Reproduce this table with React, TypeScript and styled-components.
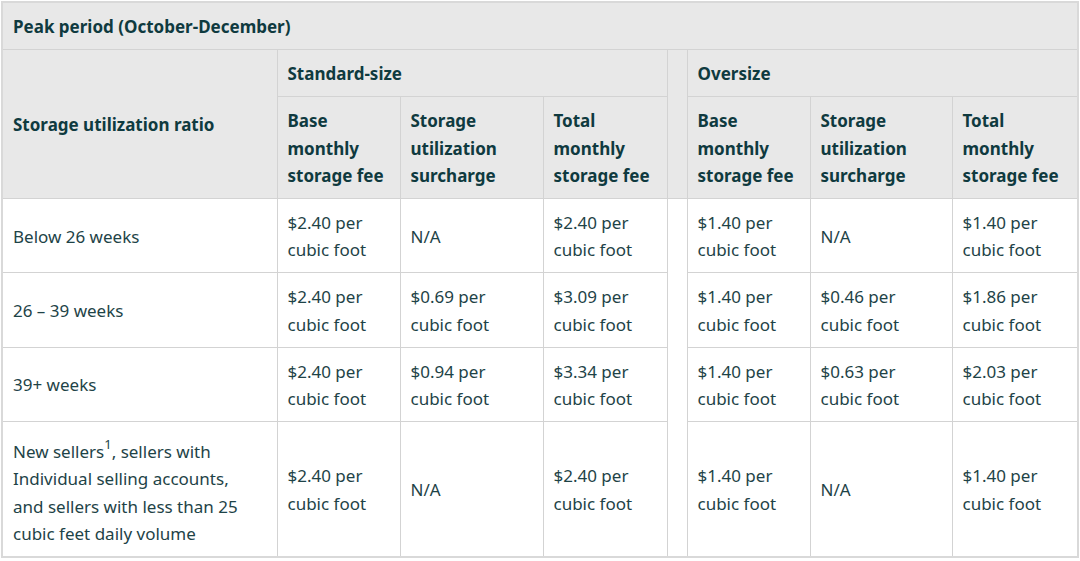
import React from "react";
import styled, { createGlobalStyle } from "styled-components";

const Global = createGlobalStyle`
  html, body { margin: 0; padding: 0; background: #ffffff; }
  body { font-family: "Noto Sans", "Open Sans", sans-serif; }
`;

const Page = styled.div`
  padding: 1px 2px 0 1px;
`;

const Table = styled.table`
  border-collapse: collapse;
  width: 1076px;
  table-layout: fixed;
  border: 2px solid #d9d9d9;
  font-family: "Noto Sans", "Open Sans", sans-serif;
  font-size: 17px;
  line-height: 27.2px;
  color: #0f3a3f;
`;

const Th = styled.th`
  background: #e8e8e8;
  border: 1px solid #d3d3d3;
  text-align: left;
  vertical-align: middle;
  font-weight: 700;
  padding: 10px 12px 9px 10px;
`;

const Td = styled.td`
  background: #ffffff;
  border: 1px solid #d3d3d3;
  vertical-align: middle;
  padding: 10px 16px 9px 10px;
  font-weight: 400;
  color: #1e4347;
`;

const Spacer = styled.td<{ $head?: boolean }>`
  background: ${(p) => (p.$head ? "#e8e8e8" : "#ffffff")};
  border: 1px solid #d3d3d3;
  padding: 0;
`;

const Sup = styled.sup`
  font-size: 13px;
  line-height: 24px;
  vertical-align: 9px;
`;

const cols = [275, 123, 143, 124, 20, 123, 142, 126];

type Row = {
  label: React.ReactNode;
  std: [string, string, string];
  over: [string, string, string];
};

const rows: Row[] = [
  {
    label: "Below 26 weeks",
    std: ["$2.40 per cubic foot", "N/A", "$2.40 per cubic foot"],
    over: ["$1.40 per cubic foot", "N/A", "$1.40 per cubic foot"],
  },
  {
    label: "26 – 39 weeks",
    std: ["$2.40 per cubic foot", "$0.69 per cubic foot", "$3.09 per cubic foot"],
    over: ["$1.40 per cubic foot", "$0.46 per cubic foot", "$1.86 per cubic foot"],
  },
  {
    label: "39+ weeks",
    std: ["$2.40 per cubic foot", "$0.94 per cubic foot", "$3.34 per cubic foot"],
    over: ["$1.40 per cubic foot", "$0.63 per cubic foot", "$2.03 per cubic foot"],
  },
  {
    label: (
      <>
        New sellers<Sup>1</Sup>, sellers with Individual selling accounts, and sellers with less than 25 cubic feet daily volume
      </>
    ),
    std: ["$2.40 per cubic foot", "N/A", "$2.40 per cubic foot"],
    over: ["$1.40 per cubic foot", "N/A", "$1.40 per cubic foot"],
  },
];

const subHeads = ["Base monthly storage fee", "Storage utilization surcharge", "Total monthly storage fee"];

export default function App() {
  return (
    <Page>
      <Global />
      <Table>
        <colgroup>
          {cols.map((w, i) => (
            <col key={i} style={{ width: w }} />
          ))}
        </colgroup>
        <thead>
          <tr>
            <Th colSpan={8}>Peak period (October-December)</Th>
          </tr>
          <tr>
            <Th rowSpan={2}>Storage utilization ratio</Th>
            <Th colSpan={3}>Standard-size</Th>
            <Spacer $head rowSpan={2} />
            <Th colSpan={3}>Oversize</Th>
          </tr>
          <tr>
            {subHeads.map((h) => (
              <Th key={"s" + h}>{h}</Th>
            ))}
            {subHeads.map((h) => (
              <Th key={"o" + h}>{h}</Th>
            ))}
          </tr>
        </thead>
        <tbody>
          {rows.map((r, i) => (
            <tr key={i}>
              <Td>{r.label}</Td>
              {r.std.map((c, j) => (
                <Td key={"s" + j}>{c}</Td>
              ))}
              {i === 0 && <Spacer rowSpan={rows.length} />}
              {r.over.map((c, j) => (
                <Td key={"o" + j}>{c}</Td>
              ))}
            </tr>
          ))}
        </tbody>
      </Table>
    </Page>
  );
}
